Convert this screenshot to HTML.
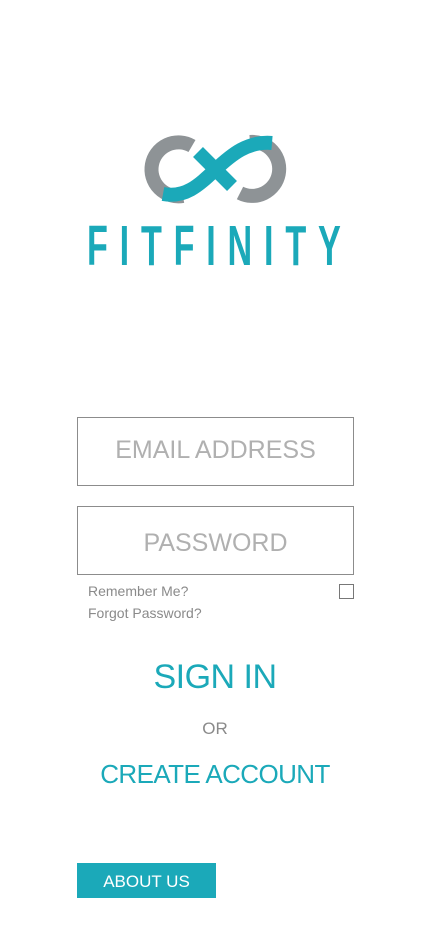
<!DOCTYPE html>
<html><head><meta charset="utf-8"><style>
html,body{margin:0;padding:0;background:#fff;width:430px;height:932px;overflow:hidden;font-family:"Liberation Sans",sans-serif;position:relative}
.a{position:absolute}
.box{position:absolute;left:77px;width:275px;border:1px solid #8c8c8c;color:#b0b0b0;font-size:25px;text-align:center}
.s{color:#8a8a8a;font-size:14px}
.t{color:#1ba9b9;text-align:center;width:430px;left:0}
</style></head><body>
<svg class="a" style="left:0;top:0" width="430" height="300">
 <g fill="none" stroke-width="14">
  <path d="M192 146 A27 27 0 1 0 183 196" stroke="#8e9396"/>
  <path d="M240 193 A27 27 0 1 0 250 142" stroke="#8e9396"/>
  <path d="M163 194 C185 198 198 186 215 170 C232 154 248 141 272 143" stroke="#1ba9b9"/>
  <path d="M198 152 L232 186" stroke="#1ba9b9"/>
 </g>
 <g transform="scale(0.6,1)">
 <text x="145" y="265" textLength="423" lengthAdjust="spacing" font-family="Liberation Sans, sans-serif" font-weight="bold" font-size="57" fill="#1ba9b9">FITFINITY</text>
 </g>
</svg>
<div class="box" style="top:417px;height:67px;line-height:64px">EMAIL ADDRESS</div>
<div class="box" style="top:506px;height:67px;line-height:72px">PASSWORD</div>
<div class="a s" style="left:88px;top:583px">Remember Me?</div>
<div class="a s" style="left:88px;top:605px">Forgot Password?</div>
<div class="a" style="left:339px;top:584px;width:13px;height:13px;border:1px solid #777"></div>
<div class="a t" style="top:658px;font-size:34px;letter-spacing:-0.5px">SIGN IN</div>
<div class="a" style="left:0;width:430px;text-align:center;top:719px;font-size:17px;color:#8a8a8a">OR</div>
<div class="a t" style="top:759px;font-size:26px;letter-spacing:-0.6px">CREATE ACCOUNT</div>
<div class="a" style="left:77px;top:863px;width:139px;height:35px;background:#1ba9b9;color:#fff;font-size:17px;line-height:37px;text-align:center">ABOUT US</div>
</body></html>
